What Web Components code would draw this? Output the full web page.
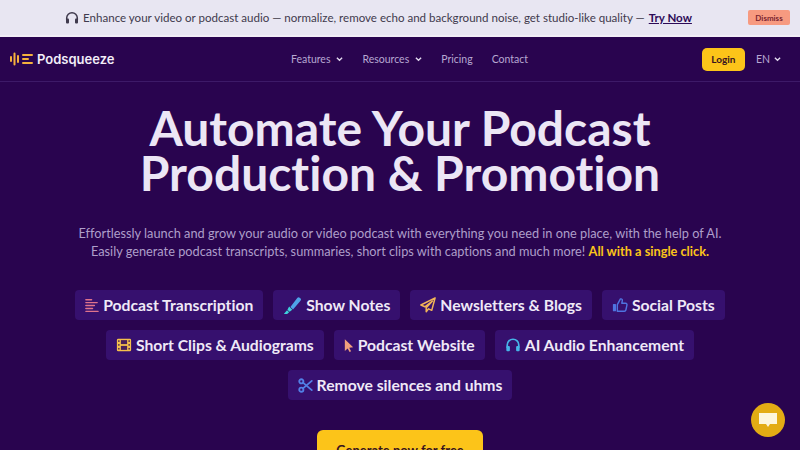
<!DOCTYPE html>
<html lang="en">
<head>
<meta charset="utf-8">
<title>Podsqueeze</title>
<style>
  html, body { margin: 0; height: 450px; overflow: hidden; background: #29044f; }
  body { font-family: Lato, "Noto Sans", sans-serif; font-variant-ligatures: none; }
</style>
</head>
<body>
<promo-banner></promo-banner>
<site-nav></site-nav>
<hero-section>
  <feature-chip icon="lines">Podcast Transcription</feature-chip>
  <feature-chip icon="marker">Show Notes</feature-chip>
  <feature-chip icon="plane">Newsletters &amp; Blogs</feature-chip>
  <feature-chip icon="thumb">Social Posts</feature-chip>
  <feature-chip icon="film">Short Clips &amp; Audiograms</feature-chip>
  <feature-chip icon="cursor">Podcast Website</feature-chip>
  <feature-chip icon="phones">AI Audio Enhancement</feature-chip>
  <feature-chip icon="scissors">Remove silences and uhms</feature-chip>
</hero-section>
<chat-bubble></chat-bubble>

<script>
// Icons used by the feature chips. The glyphs differ in width, as in an icon font.
const ICONS = {
  lines: { w: 14, h: 15, box: '1 0 15 18', art: `<g fill="none" stroke="#e0748c" stroke-width="1.700" stroke-linecap="round"><path d="M2 2h6M2 5.500h12M2 9h9M2 12.500h7M2 16h13"/></g>` },
  marker: { w: 19, h: 19, box: '0 0 18 18', art: `<path d="M7 10.500 13.500 1.800a1.600 1.600 0 0 1 2.300-.2l.7.6a1.600 1.600 0 0 1 .1 2.300L9.500 12.700z" fill="#4fa3e8"/><path d="M5.800 10 8.800 13 6.300 15 4.200 13z" fill="#3ed1dc"/><path d="M3.800 13.500 5.800 15.500 3.900 17H.8z" fill="#3ed1dc"/>` },
  plane: { w: 16, h: 16, box: '0 0 18 18', art: `<path d="M17 1 1 9l4.500 2L14 4.500 7 12v4.500l2.600-3.200 3.600 1.700z" fill="none" stroke="#f2b458" stroke-width="1.700" stroke-linejoin="round"/>` },
  thumb: { w: 16, h: 16, box: '0 0 18 18', art: `<rect x="1" y="8" width="3.500" height="8" rx=".6" fill="#4f74e0"/><path d="M6 8.500 9.500 2.200c1.700-.5 2.500.9 2 2.600L11 7h4.200c1.300 0 1.900 1 1.600 2.200l-1.200 5.400c-.2.900-.8 1.400-1.700 1.400H6z" fill="none" stroke="#4f74e0" stroke-width="1.600" stroke-linejoin="round"/>` },
  film: { w: 16, h: 16, box: '0 0 18 18', art: `<rect x="1" y="2" width="16" height="14" rx="1.500" fill="#f5c04c"/><g fill="#4a2158"><rect x="5.500" y="3.500" width="7" height="4.500"/><rect x="5.500" y="10" width="7" height="4.500"/><rect x="2.400" y="3.700" width="1.600" height="1.800"/><rect x="2.400" y="8" width="1.600" height="1.800"/><rect x="2.400" y="12.300" width="1.600" height="1.800"/><rect x="14" y="3.700" width="1.600" height="1.800"/><rect x="14" y="8" width="1.600" height="1.800"/><rect x="14" y="12.300" width="1.600" height="1.800"/></g>` },
  cursor: { w: 10, h: 15, box: '3 0 12 18', art: `<path d="M4 1.500v14l3.400-3 2.300 4.300 1.800-1-2.200-4.200 4.700-.4z" fill="#f0a07c"/>` },
  phones: { w: 16, h: 16, box: '0 0 18 18', art: `<path d="M2.500 12V9a6.500 6.500 0 0 1 13 0v3" fill="none" stroke="#46b4e8" stroke-width="1.900"/><rect x="1.500" y="10" width="4" height="6" rx="1.200" fill="#46b4e8"/><rect x="12.500" y="10" width="4" height="6" rx="1.200" fill="#46b4e8"/>` },
  scissors: { w: 15, h: 15, box: '0 0 18 18', art: `<g fill="none" stroke="#5280e6" stroke-width="2.200" stroke-linecap="round"><circle cx="4" cy="4" r="2.500"/><circle cx="4" cy="14" r="2.500"/><path d="M6 5.500 16.500 14.500M6 12.500 16.500 3.500"/></g>` }
}

/**
 * The light announcement strip at the top of the page.
 */
customElements.define('promo-banner',
  class extends HTMLElement {
    constructor () {
      super()
      this.attachShadow({ mode: 'open' }).innerHTML = `
        <style>
          :host { display: flex; align-items: center; height: 35px; padding: 2px 10px 0 0; background: #e8e6f2; border-bottom: 2px solid #f1edf6; color: #3f3a4d; font-size: 11.550px; margin-top: -2px; }
          .text { flex: 1; display: flex; align-items: center; justify-content: center; gap: 4px; padding-left: 9px; white-space: nowrap; }
          svg { width: 14px; height: 14px; }
          a { color: #2d0b57; font-weight: 700; text-decoration: underline; margin-left: 1px; }
          button { width: 42px; height: 15px; padding: 0; border: 0; border-radius: 2px; background: #f79a80; color: #7a2430; font: 700 8px Lato, sans-serif; }
        </style>
        <div class="text">
          <svg viewBox="0 0 14 14"><path d="M1.700 9V7a5.300 5.300 0 0 1 10.600 0v2" fill="none" stroke="#3f3a4d" stroke-width="1.500"/><rect x="1" y="7.500" width="3" height="5" rx="1" fill="#3f3a4d"/><rect x="10" y="7.500" width="3" height="5" rx="1" fill="#3f3a4d"/></svg>
          <span>Enhance your video or podcast audio — normalize, remove echo and background noise, get studio-like quality — <a href="#">Try Now</a></span>
        </div>
        <button>Dismiss</button>
      `
    }
  }
)

/**
 * The main navigation bar.
 */
customElements.define('site-nav',
  class extends HTMLElement {
    constructor () {
      super()
      const chevron = '<svg class="chev" viewBox="0 0 8 6"><path d="M1 1.500 4 4.500 7 1.500" fill="none" stroke="currentColor" stroke-width="1.500"/></svg>'
      this.attachShadow({ mode: 'open' }).innerHTML = `
        <style>
          :host { display: grid; grid-template-columns: 1fr auto 1fr; align-items: center; height: 44px; padding: 0 19px 0 10px; border-bottom: 1px solid #3d1a68; color: #b7a8d2; font-size: 10.500px; }
          .logo { display: flex; align-items: center; gap: 4px; color: #f2edf8; font: 600 13px Inter, sans-serif; }
          .logo svg { width: 23px; height: 14px; }
          ul { display: flex; gap: 19px; margin: 0 0 0 28px; padding: 0; list-style: none; }
          li { display: flex; align-items: center; gap: 6px; }
          .chev { width: 7px; height: 6px; color: #e4dcf0; }
          .end { display: flex; justify-content: flex-end; align-items: center; gap: 11px; }
          button { width: 43px; height: 23px; padding: 0; border: 0; border-radius: 5px; background: #fcc419; color: #38131f; font: 700 10px Lato, sans-serif; }
          .lang { display: flex; align-items: center; gap: 4px; }
        </style>
        <div class="logo">
          <svg viewBox="0 0 23 14"><g stroke="#f5b13d" stroke-width="2" stroke-linecap="round" fill="none"><path d="M1 5v4M4.500 1.500v11M8 4v6"/><path d="M13 3h9M13 7h5M13 11h9"/></g></svg>
          <span>Podsqueeze</span>
        </div>
        <ul>
          <li>Features ${chevron}</li>
          <li>Resources ${chevron}</li>
          <li>Pricing</li>
          <li>Contact</li>
        </ul>
        <div class="end">
          <button>Login</button>
          <span class="lang">EN ${chevron}</span>
        </div>
      `
    }
  }
)

/**
 * One pill in the list of features.
 */
customElements.define('feature-chip',
  class extends HTMLElement {
    constructor () {
      super()
      const icon = ICONS[this.getAttribute('icon')]
      this.attachShadow({ mode: 'open' }).innerHTML = `
        <style>
          :host { display: inline-flex; align-items: center; gap: 4px; height: 30px; padding: 0 10px; border-radius: 4px; background: #36106e; color: #efe9f7; font-size: 15.700px; font-weight: 700; white-space: nowrap; }
          svg { flex: none; }
        </style>
        <svg width="${icon.w}" height="${icon.h}" viewBox="${icon.box}" preserveAspectRatio="none">${icon.art}</svg>
        <slot></slot>
      `
    }
  }
)

/**
 * The headline block with the chips and the call to action.
 */
customElements.define('hero-section',
  class extends HTMLElement {
    constructor () {
      super()
      this.attachShadow({ mode: 'open' }).innerHTML = `
        <style>
          :host { display: flex; flex-direction: column; align-items: center; text-align: center; }
          h1 { margin: 23px 0 0; color: #ece6f5; font-size: 48px; font-weight: 700; line-height: 45px; }
          p { margin: 29px 0 0; color: #ae9fca; font-size: 12.750px; line-height: 18px; }
          b { color: #fcc419; }
          .chips { display: flex; flex-wrap: wrap; justify-content: center; gap: 10px; width: 680px; margin-top: 30px; }
          button { width: 166px; height: 44px; margin-top: 30px; padding: 0 0 5px; border: 0; border-radius: 6px; background: #fcc419; color: #38131f; font: 700 13px Lato, sans-serif; }
        </style>
        <h1>Automate Your Podcast<br>Production &amp; Promotion</h1>
        <p>Effortlessly launch and grow your audio or video podcast with everything you need in one place, with the help of AI.<br>Easily generate podcast transcripts, summaries, short clips with captions and much more! <b>All with a single click.</b></p>
        <div class="chips"><slot></slot></div>
        <button>Generate now for free</button>
      `
    }
  }
)

/**
 * The round chat launcher, floating over the page corner.
 */
customElements.define('chat-bubble',
  class extends HTMLElement {
    constructor () {
      super()
      this.attachShadow({ mode: 'open' }).innerHTML = `
        <style>
          :host { position: fixed; right: 15px; bottom: 13px; display: flex; align-items: center; justify-content: center; width: 34px; height: 34px; border-radius: 50%; background: #e3ac14; }
          svg { width: 20px; height: 18px; }
        </style>
        <svg viewBox="0 0 20 18"><path d="M1 2h18v11h-7l-2 3-2-3H1z" fill="#fdf6dc"/></svg>
      `
    }
  }
)
</script>
</body>
</html>
